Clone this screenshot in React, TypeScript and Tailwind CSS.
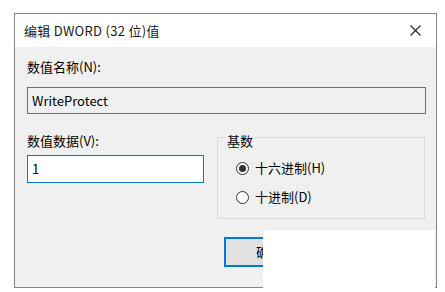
import React from "react";

const font = { fontFamily: '"Noto Sans CJK SC", "Microsoft YaHei", "Noto Sans", sans-serif' };

function Radio({ checked, label }: { checked: boolean; label: string }) {
  return (
    <div className="flex items-center h-[20px]">
      <span className="w-[13px] h-[13px] rounded-full border border-[#333333] bg-white flex items-center justify-center">
        {checked && <span className="w-[7px] h-[7px] rounded-full bg-[#333333]" />}
      </span>
      <span className="ml-[6px] text-[13px] leading-[18px] text-black">{label}</span>
    </div>
  );
}

export default function App() {
  return (
    <div className="relative w-[445px] h-[292px] bg-white overflow-hidden pt-[13px] pl-[14px]" style={font}>
      <div className="w-[423px] h-[275px] border border-[#858585] flex flex-col">
        <div className="h-[33px] bg-white flex items-center pl-[9px] pr-[11px] justify-between">
          <span className="text-[13px] leading-[18px] text-[#1a1a1a] tracking-[0.3px]">编辑 DWORD (32 位)值</span>
          <svg width="11" height="11" viewBox="0 0 11 11" className="mr-[4px]">
            <path d="M0.5 0.5 L10.5 10.5 M10.5 0.5 L0.5 10.5" stroke="#222" strokeWidth="1.1" fill="none" />
          </svg>
        </div>
        <div className="flex-1 bg-[#f0f0f0] pl-[12px] pr-[10px] pt-[11px] flex flex-col">
          <div className="text-[13px] leading-[18px] text-black">数值名称(N):</div>
          <div className="mt-[11px] h-[27px] w-[399px] border border-[#707070] bg-[#f0f0f0] flex items-center pl-[4px] text-[13px] text-black">
            WriteProtect
          </div>
          <div className="mt-[18px] flex gap-[13px]">
            <div className="w-[177px] flex flex-col">
              <div className="text-[13px] leading-[18px] text-black">数值数据(V):</div>
              <div className="mt-[5px] h-[28px] border border-[#0078d7] bg-white flex items-center pl-[4px] text-[13px] text-black">
                1
              </div>
            </div>
            <div className="relative mt-[5px] w-[208px] h-[82px] border border-[#dcdcdc] pt-[20px] pl-[18px] flex flex-col gap-[9px]">
              <span className="absolute -top-[6px] left-[8px] px-px bg-[#f0f0f0] text-[13px] leading-[18px] text-black">基数</span>
              <Radio checked label="十六进制(H)" />
              <Radio checked={false} label="十进制(D)" />
            </div>
          </div>
          <div className="mt-[18px] flex">
            <div className="ml-[197px] w-[90px] h-[30px] border-2 border-[#0078d7] bg-[#e1e1e1] flex items-center justify-center text-[13px] text-black">
              确定
            </div>
          </div>
        </div>
      </div>
      <div className="absolute left-[263px] top-[230px] w-[172px] h-[62px] bg-white" />
    </div>
  );
}
